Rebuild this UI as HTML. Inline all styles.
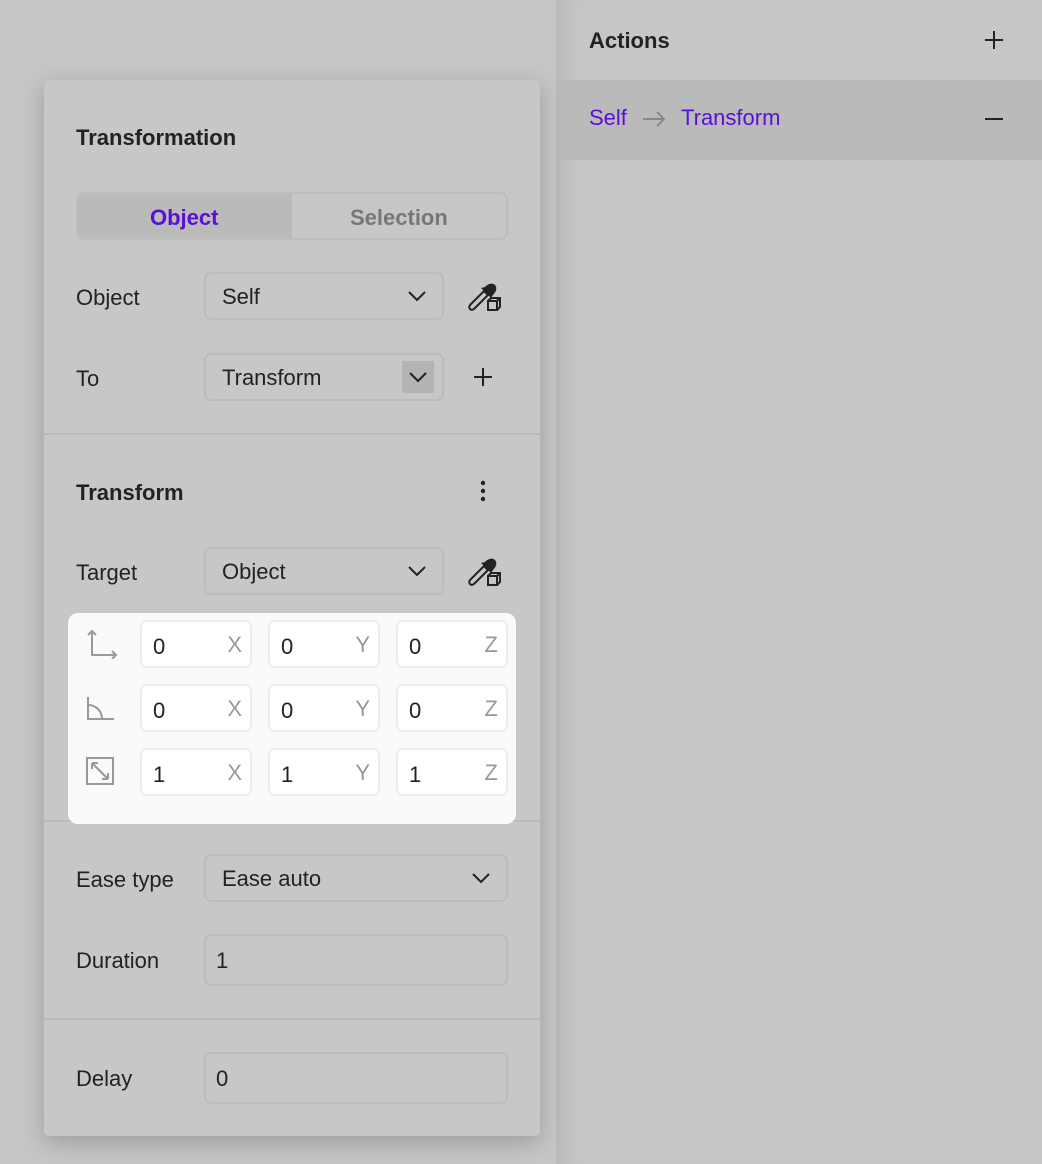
<!DOCTYPE html>
<html><head><meta charset="utf-8"><style>
*{box-sizing:border-box;margin:0;padding:0}
body{width:1042px;height:1164px;background:#c6c6c6;font-family:"Liberation Sans",sans-serif;color:#222;position:relative;overflow:hidden}
.abs{position:absolute}
.right{left:556px;top:0;width:486px;height:1164px;background:#c6c6c6;box-shadow:inset 24px 0 20px -16px rgba(0,0,0,.08)}
.panel{left:44px;top:80px;width:496px;height:1056px;background:#c7c7c7;border-radius:6px;box-shadow:0 6px 24px rgba(0,0,0,.22)}
.t{font-size:22px}
.b{font-weight:bold}
.box{position:absolute;border:2px solid #bcbcbc;border-radius:7px;height:48px}
.lbl{position:absolute;font-size:22px;color:#222}
.val{position:absolute;left:16px;top:10px;font-size:22px;color:#222}
.hr{position:absolute;left:0;width:496px;height:2px;background:#bababa}
.inp{position:absolute;width:112px;height:48px;background:#fff;border:2px solid #ececec;border-radius:7px}
.inp .n{position:absolute;left:11px;top:12px;font-size:22px;color:#222}
.inp .a{position:absolute;right:8px;top:10px;font-size:22px;color:#999}
</style></head><body>
<div class="abs right">
  <div class="abs t b" style="left:33px;top:28px">Actions</div>
  <svg class="abs" style="left:428px;top:30px" width="20" height="20"><path d="M10 1v18M1 10h18" stroke="#222" stroke-width="2"/></svg>
  <div class="abs" style="left:0;top:80px;width:486px;height:80px;background:#bababa">
    <div class="abs t" style="left:33px;top:25px;color:#5a0fd6">Self</div>
    <svg class="abs" style="left:86px;top:30px" width="24" height="18"><path d="M1 9h21M15 2l7 7-7 7" stroke="#888" stroke-width="2" fill="none"/></svg>
    <div class="abs t" style="left:125px;top:25px;color:#5a0fd6">Transform</div>
    <svg class="abs" style="left:428px;top:37px" width="20" height="4"><path d="M1 2h18" stroke="#222" stroke-width="2"/></svg>
  </div>
</div>
<div class="abs panel">
  <div class="abs t b" style="left:32px;top:45px">Transformation</div>
  <div class="abs" style="left:32px;top:112px;width:432px;height:48px;border:2px solid #bdbdbd;border-radius:8px;overflow:hidden">
    <div class="abs" style="left:0;top:0;width:214px;height:46px;background:#bababa"></div>
    <div class="abs t b" style="left:72px;top:11px;color:#5a0fd6">Object</div>
    <div class="abs t b" style="left:272px;top:11px;color:#777">Selection</div>
  </div>
  <div class="lbl" style="left:32px;top:205px">Object</div>
  <div class="box" style="left:160px;top:192px;width:240px"><div class="val">Self</div>
    <svg class="abs" style="left:202px;top:16px" width="18" height="12"><path d="M1 2l8 8 8-8" stroke="#222" stroke-width="2" fill="none"/></svg></div>
  <svg class="abs" style="left:422px;top:199px" width="36" height="34"><path d="M4 30c-2-2 0-4 1-5l13-13 4 4-13 13c-1 1-3 3-5 1z" stroke="#222" stroke-width="2" fill="none"/><path d="M15 9l10 10 2-3c4-4 4-8 2-10s-6-2-10 2z" fill="#222"/><rect x="22" y="22" width="9" height="9" stroke="#222" stroke-width="2" fill="#c7c7c7"/><path d="M22 22l3-3h9v9l-3 3M31 22l3-3" stroke="#222" stroke-width="2" fill="none"/></svg>
  <div class="lbl" style="left:32px;top:286px">To</div>
  <div class="box" style="left:160px;top:273px;width:240px"><div class="val">Transform</div>
    <div class="abs" style="left:196px;top:6px;width:32px;height:32px;background:#b4b4b4"></div>
    <svg class="abs" style="left:203px;top:16px" width="18" height="12"><path d="M1 2l8 8 8-8" stroke="#222" stroke-width="2" fill="none"/></svg></div>
  <svg class="abs" style="left:429px;top:287px" width="20" height="20"><path d="M10 1v18M1 10h18" stroke="#222" stroke-width="2"/></svg>
  <div class="hr" style="top:353px"></div>
  <div class="abs t b" style="left:32px;top:400px">Transform</div>
  <svg class="abs" style="left:436px;top:400px" width="6" height="22"><circle cx="3" cy="3" r="2.2" fill="#222"/><circle cx="3" cy="11" r="2.2" fill="#222"/><circle cx="3" cy="19" r="2.2" fill="#222"/></svg>
  <div class="lbl" style="left:32px;top:480px">Target</div>
  <div class="box" style="left:160px;top:467px;width:240px"><div class="val">Object</div>
    <svg class="abs" style="left:202px;top:16px" width="18" height="12"><path d="M1 2l8 8 8-8" stroke="#222" stroke-width="2" fill="none"/></svg></div>
  <svg class="abs" style="left:422px;top:474px" width="36" height="34"><path d="M4 30c-2-2 0-4 1-5l13-13 4 4-13 13c-1 1-3 3-5 1z" stroke="#222" stroke-width="2" fill="none"/><path d="M15 9l10 10 2-3c4-4 4-8 2-10s-6-2-10 2z" fill="#222"/><rect x="22" y="22" width="9" height="9" stroke="#222" stroke-width="2" fill="#c7c7c7"/><path d="M22 22l3-3h9v9l-3 3M31 22l3-3" stroke="#222" stroke-width="2" fill="none"/></svg>
  <div class="hr" style="top:740px"></div>
  <div class="abs" style="left:24px;top:533px;width:448px;height:211px;background:#fafafa;border-radius:10px">
    <svg class="abs" style="left:16px;top:16px" width="34" height="30"><path d="M8 2v24h24M4 6l4-4 4 4M28 22l4 4-4 4" stroke="#999" stroke-width="2" fill="none"/></svg>
    <svg class="abs" style="left:18px;top:82px" width="30" height="26"><path d="M2 2v22h26M2 10c8 0 14 6 14 14" stroke="#999" stroke-width="2" fill="none"/></svg>
    <svg class="abs" style="left:18px;top:144px" width="30" height="30"><rect x="1" y="1" width="26" height="26" stroke="#999" stroke-width="2" fill="none"/><path d="M6 6l16 16M6 6h6M6 6v6M22 22h-6M22 22v-6" stroke="#999" stroke-width="2" fill="none"/></svg>
    <div class="inp" style="left:72px;top:7px"><span class="n">0</span><span class="a">X</span></div>
    <div class="inp" style="left:200px;top:7px"><span class="n">0</span><span class="a">Y</span></div>
    <div class="inp" style="left:328px;top:7px"><span class="n">0</span><span class="a">Z</span></div>
    <div class="inp" style="left:72px;top:71px"><span class="n">0</span><span class="a">X</span></div>
    <div class="inp" style="left:200px;top:71px"><span class="n">0</span><span class="a">Y</span></div>
    <div class="inp" style="left:328px;top:71px"><span class="n">0</span><span class="a">Z</span></div>
    <div class="inp" style="left:72px;top:135px"><span class="n">1</span><span class="a">X</span></div>
    <div class="inp" style="left:200px;top:135px"><span class="n">1</span><span class="a">Y</span></div>
    <div class="inp" style="left:328px;top:135px"><span class="n">1</span><span class="a">Z</span></div>
  </div>
  <div class="lbl" style="left:32px;top:787px">Ease type</div>
  <div class="box" style="left:160px;top:774px;width:304px"><div class="val">Ease auto</div>
    <svg class="abs" style="left:266px;top:16px" width="18" height="12"><path d="M1 2l8 8 8-8" stroke="#222" stroke-width="2" fill="none"/></svg></div>
  <div class="lbl" style="left:32px;top:868px">Duration</div>
  <div class="box" style="left:160px;top:854px;width:304px;height:52px"><div class="val" style="left:10px;top:12px">1</div></div>
  <div class="hr" style="top:938px"></div>
  <div class="lbl" style="left:32px;top:986px">Delay</div>
  <div class="box" style="left:160px;top:972px;width:304px;height:52px"><div class="val" style="left:10px;top:12px">0</div></div>
</div>
</body></html>
